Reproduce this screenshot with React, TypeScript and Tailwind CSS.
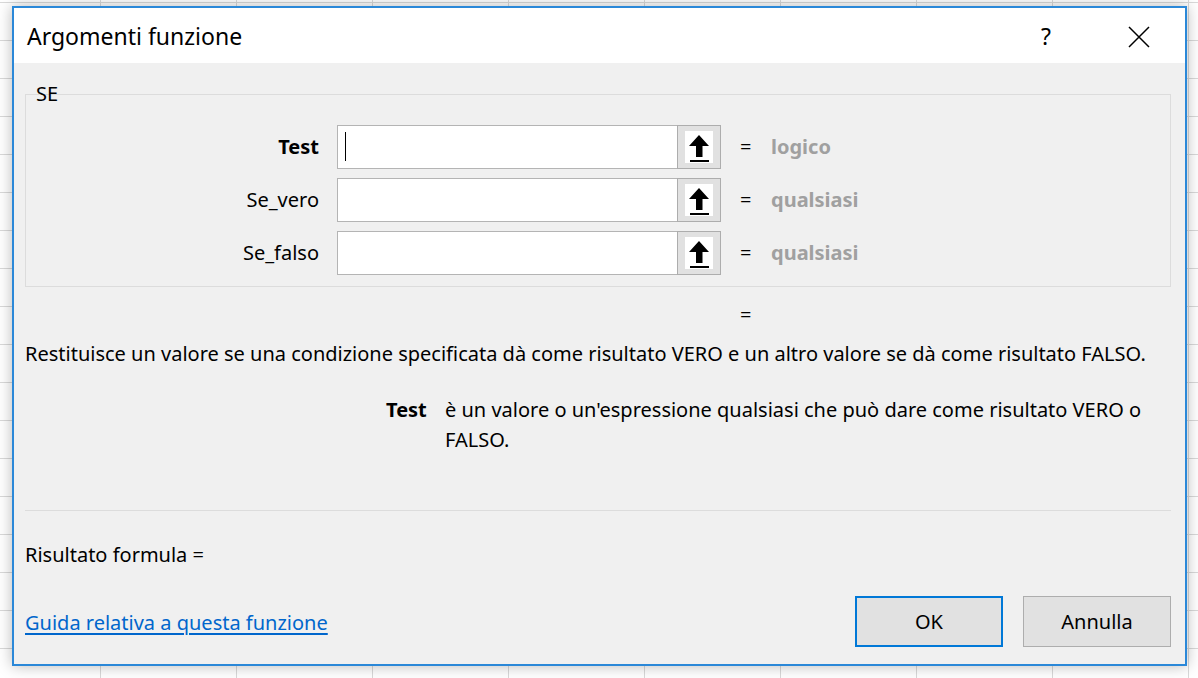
import React from 'react';

// Argomenti funzione (Excel) dialog over a sheet grid

const FONT = "font-['Noto_Sans',sans-serif]";

const ArrowIcon = () => (
  <svg width="28" height="32" viewBox="0 0 28 32">
    <rect width="28" height="32" fill="#fff" />
    <path d="M14 4 L4 15 H11 V26 H17.5 V15 H24 Z" fill="#000" />
    <rect x="5" y="29" width="19" height="2" fill="#000" />
  </svg>
);

interface ArgRowProps {
  label: string;
  hint: string;
  bold?: boolean;
  focused?: boolean;
}

const ArgRow = ({ label, hint, bold, focused }: ArgRowProps) => (
  <div className="flex items-center h-[44px] pt-[1px]">
    <div className={`w-[293px] text-right text-[20px] text-black ${bold ? 'font-bold' : ''}`}>{label}</div>
    <div className="ml-[18px] flex h-[44px]">
      <div className="w-[340px] h-full bg-white border border-[#b4b4b4] border-r-0 flex items-center pl-[7px]">
        {focused && <div className="w-px h-[29px] bg-black" />}
      </div>
      <div className="w-[44px] h-full bg-[#e1e1e1] border border-[#adadad] flex items-center justify-center">
        <ArrowIcon />
      </div>
    </div>
    <div className="ml-[19px] w-[31px] text-[20px] text-black">=</div>
    <div className="text-[20px] font-bold text-[#a0a0a0]">{hint}</div>
  </div>
);

export default function App() {
  return (
    <div
      className={`${FONT} w-[1198px] h-[678px] overflow-hidden bg-white pt-[6px] pl-[12px] bg-[linear-gradient(to_right,#d9d9d9_1px,transparent_1px),linear-gradient(to_bottom,#d9d9d9_1px,transparent_1px)] bg-size-[136px_38px] bg-position-[100px_2px]`}
    >
      <div className="w-[1175px] h-[660px] border-2 border-[#2b88d8] bg-[#f0f0f0] shadow-[0_0_14px_rgba(0,0,0,0.28)] flex flex-col">
        {/* Title bar */}
        <div className="h-[55px] bg-white flex items-center pl-[13px] pt-[2px]">
          <div className="text-[23px] text-black flex-1">Argomenti funzione</div>
          <div className="text-[23px] text-black w-[24px] text-center">?</div>
          <div className="ml-[70px] mr-[35px] w-[22px] h-[22px] flex items-center justify-center">
            <svg width="22" height="22" viewBox="0 0 22 22">
              <path d="M1 1 L21 21 M21 1 L1 21" stroke="#000" strokeWidth="1.5" />
            </svg>
          </div>
        </div>

        {/* Body */}
        <div className="flex-1 flex flex-col pl-[11px] pr-[14px]">
          <div className="relative mt-[31px] h-[193px] border border-[#dcdcdc] pt-[29px] flex flex-col gap-[9px]">
            <div className="absolute left-[10px] top-[-14px] text-[20px] text-black leading-[26px]">SE</div>
            <ArgRow label="Test" hint="logico" bold focused />
            <ArgRow label="Se_vero" hint="qualsiasi" />
            <ArgRow label="Se_falso" hint="qualsiasi" />
          </div>

          <div className="mt-[16px] ml-[715px] text-[20px] leading-[24px] text-black">=</div>

          <div className="mt-[15px] text-[20px] leading-[24px] text-black whitespace-nowrap">
            Restituisce un valore se una condizione specificata dà come risultato VERO e un altro valore se dà come risultato FALSO.
          </div>

          <div className="mt-[29px] flex text-[20px] leading-[30px] text-black">
            <div className="ml-[361px] w-[59px] font-bold">Test</div>
            <div className="w-[712px]">è un valore o un'espressione qualsiasi che può dare come risultato VERO o FALSO.</div>
          </div>

          <div className="mt-[55px] h-px bg-[#dcdcdc]" />

          <div className="mt-[32px] text-[20px] leading-[24px] text-black">Risultato formula =</div>

          <div className="mt-[29px] flex items-center">
            <a className="text-[20px] text-[#0066cc] underline underline-offset-[3px] flex-1 pt-[3px]" href="#">
              Guida relativa a questa funzione
            </a>
            <button className="w-[148px] h-[51px] bg-[#e1e1e1] border-2 border-[#0078d7] text-[20px] text-black">OK</button>
            <button className="ml-[20px] w-[148px] h-[51px] bg-[#e1e1e1] border border-[#adadad] text-[20px] text-black">Annulla</button>
          </div>
        </div>
      </div>
    </div>
  );
}
